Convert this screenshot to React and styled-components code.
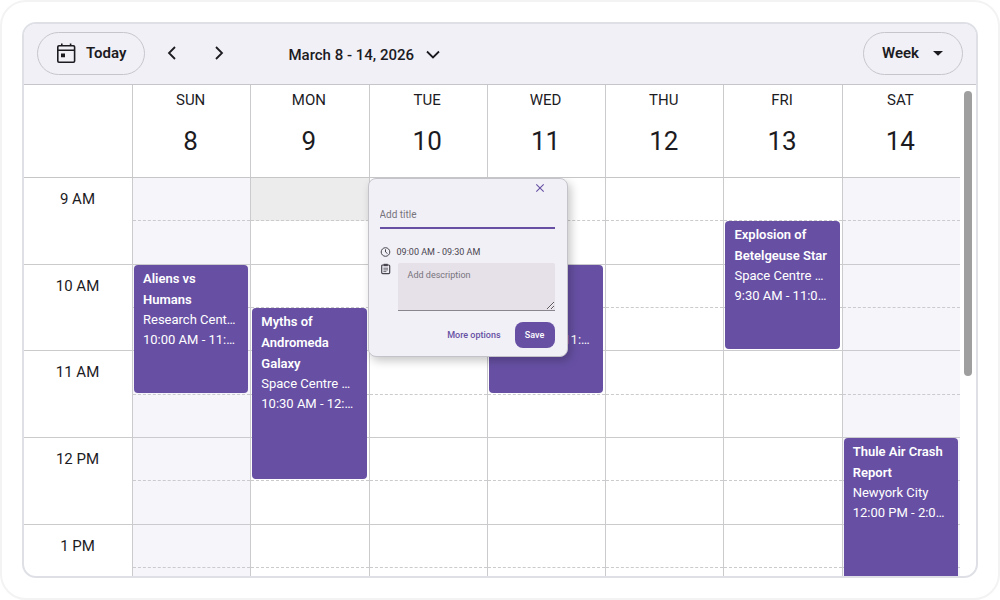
import React from "react";
import styled, { createGlobalStyle } from "styled-components";

const GlobalStyle = createGlobalStyle`
  *, *::before, *::after { box-sizing: border-box; }
  body {
    margin: 0;
    background: #fff;
    color: #1c1b1f;
    font-family: Roboto, "Liberation Sans", sans-serif;
  }
  button, input, textarea { font-family: inherit; color: inherit; }
`;

const Page = styled.main`
  display: flex;
  height: 100vh;
  padding: 20px;
  border: 2px solid #f3f3f4;
  border-radius: 26px;
`;

const Scheduler = styled.section`
  flex: 1;
  min-width: 0;
  display: flex;
  flex-direction: column;
  overflow: hidden;
  border: 2px solid #dee0e6;
  border-radius: 14px;
`;

const Toolbar = styled.header`
  flex: none;
  display: flex;
  align-items: center;
  height: 61px;
  padding: 0 13px 2px;
  background: #f1f0f7;
  border-bottom: 1px solid #c6c6ca;
`;

const PillButton = styled.button`
  display: flex;
  align-items: center;
  gap: ${(p) => p.$gap}px;
  height: 43px;
  padding: 0 18px 1px;
  border: 1px solid #c6c5cc;
  border-radius: 22px;
  background: transparent;
  font-size: 15px;
  font-weight: 600;
`;

const ArrowButton = styled.button`
  display: grid;
  place-items: center;
  width: 40px;
  height: 40px;
  margin-left: 7px;
  padding: 0;
  border: 0;
  background: transparent;
`;

const RangeButton = styled.button`
  display: flex;
  align-items: center;
  gap: 12px;
  margin: 4px auto 0 49px;
  padding: 0;
  border: 0;
  background: transparent;
  font-size: 15px;
  font-weight: 500;
`;

const Schedule = styled.div`
  flex: 1;
  min-height: 0;
  display: flex;
`;

const Calendar = styled.div`
  flex: 1;
  min-width: 0;
  display: flex;
  flex-direction: column;
`;

const WeekGrid = styled.div`
  display: grid;
  grid-template-columns: 108px repeat(7, minmax(0, 1fr));
`;

const HeaderRow = styled(WeekGrid)`
  flex: none;
  height: 93px;
  border-bottom: 1px solid #c6c6c8;
`;

const DayHeader = styled.div`
  grid-column: ${(p) => p.$column};
  display: flex;
  flex-direction: column;
  align-items: center;
  gap: 16px;
  padding: 5px 2px 0 0;
  border-left: 1px solid #cbcbce;
`;

const DayName = styled.span`
  font-size: 15px;
  line-height: 20px;
`;

const DayNumber = styled.span`
  font-size: 26px;
  line-height: 30px;
`;

const Body = styled.div`
  flex: 1;
  min-height: 0;
  overflow: hidden;
`;

const BodyGrid = styled(WeekGrid)`
  height: 520px;
`;

const TimeColumn = styled.div`
  display: grid;
  grid-template-rows: repeat(6, 1fr);
`;

const TimeCell = styled.div`
  padding: 11px 1px 0 0;
  border-bottom: 1px solid #cbcbce;
  font-size: 15px;
  line-height: 20px;
  text-align: center;
`;

const DayColumn = styled.div`
  position: relative;
  display: grid;
  grid-template-columns: minmax(0, 1fr);
  grid-template-rows: repeat(12, minmax(0, 1fr));
  border-left: 1px solid #cbcbce;
  background: ${(p) => (p.$weekend ? "#f5f5fa" : "#fff")};
`;

const Slot = styled.div`
  grid-column: 1;
  grid-row: ${(p) => p.$row};
  border-bottom: 1px ${(p) => (p.$row % 2 ? "dashed" : "solid")} #cbcbce;
  background: ${(p) => (p.$selected ? "#ececec" : "transparent")};
`;

const Event = styled.article`
  grid-column: 1;
  grid-row: ${(p) => p.$start} / span ${(p) => p.$span};
  margin: 0 2px 2px 1px;
  padding: 3px 11px 0 9px;
  overflow: hidden;
  border-radius: 4px;
  background: #6750a4;
  color: #fff;
`;

const EventTitle = styled.h3`
  margin: 0;
  font-size: 13px;
  font-weight: 600;
  line-height: 21px;
`;

const EventLine = styled.p`
  margin: 0;
  overflow: hidden;
  font-size: 13px;
  line-height: 20px;
  text-overflow: ellipsis;
  white-space: nowrap;
`;

const ScrollTrack = styled.div`
  flex: none;
  width: 16px;
  padding: 6px 4px 10px;
`;

const ScrollThumb = styled.div`
  width: 8px;
  height: 60%;
  border-radius: 4px;
  background: #9f9f9f;
`;

const Popup = styled.form`
  position: absolute;
  z-index: 2;
  top: 0;
  left: -2px;
  display: flex;
  flex-direction: column;
  width: 200px;
  padding: 2px 12px 8px 11px;
  border: 1px solid #c4c3ca;
  border-radius: 8px;
  background: #f1f0f7;
  box-shadow: 3px 4px 10px rgba(0, 0, 0, 0.22);
  font-size: 9px;
`;

const CloseButton = styled.button`
  align-self: flex-end;
  display: grid;
  place-items: center;
  width: 14px;
  height: 14px;
  margin-right: 8px;
  padding: 0;
  border: 0;
  background: transparent;
  color: #6750a4;
`;

const TitleInput = styled.input`
  width: 100%;
  height: 28px;
  margin-top: 6px;
  padding: 0;
  border: 0;
  border-bottom: 2px solid #6750a4;
  background: transparent;
  font-size: 10px;
  outline: none;
  &::placeholder { color: #77747c; }
`;

const Detail = styled.div`
  display: grid;
  grid-template-columns: 11px minmax(0, 1fr);
  column-gap: ${(p) => p.$gap}px;
  margin-top: ${(p) => p.$top}px;
  color: #49454f;
  line-height: 12px;
`;

const Description = styled.textarea`
  display: block;
  width: 100%;
  height: 48px;
  padding: 6px 10px;
  border: 0;
  border-bottom: 1px solid #8a8690;
  border-radius: 2px 2px 0 0;
  background: #e6e0e9;
  font-size: 9px;
  line-height: 13px;
  resize: vertical;
  outline: none;
  &::placeholder { color: #77747c; }
`;

const Actions = styled.div`
  display: flex;
  justify-content: flex-end;
  align-items: center;
  gap: 14px;
  margin-top: 11px;
`;

const TextButton = styled.button`
  padding: 0;
  border: 0;
  background: transparent;
  color: #6750a4;
  font-size: 9px;
  font-weight: 500;
`;

const SaveButton = styled(TextButton)`
  width: 40px;
  height: 26px;
  border-radius: 8px;
  background: #6750a4;
  color: #fff;
`;

const days = [
  { name: "SUN", number: 8, weekend: true, event: { title: "Aliens vs Humans", place: "Research Center", time: "10:00 AM - 11:30 AM", start: 3, span: 3 } },
  { name: "MON", number: 9, selected: 1, event: { title: "Myths of Andromeda Galaxy", place: "Space Centre USA", time: "10:30 AM - 12:30 PM", start: 4, span: 4 } },
  { name: "TUE", number: 10, popup: true },
  { name: "WED", number: 11, event: { title: "Blue Moon Eclipse", place: "Greenwich", time: "10:00 AM - 11:30 AM", start: 3, span: 3 } },
  { name: "THU", number: 12 },
  { name: "FRI", number: 13, event: { title: "Explosion of Betelgeuse Star", place: "Space Centre USA", time: "9:30 AM - 11:00 AM", start: 2, span: 3 } },
  { name: "SAT", number: 14, weekend: true, event: { title: "Thule Air Crash Report", place: "Newyork City", time: "12:00 PM - 2:00 PM", start: 7, span: 4 } },
];

const hours = ["9 AM", "10 AM", "11 AM", "12 PM", "1 PM"];
const slots = Array.from({ length: 12 }, (_, i) => i + 1);

const TodayIcon = () => (
  <svg width="20" height="22" viewBox="0 0 20 22" fill="none" stroke="currentColor" aria-hidden="true">
    <rect x="1.8" y="3.8" width="16.8" height="16.4" rx="1.2" strokeWidth="1.6" />
    <path d="M2 8.2h16.4M5.8 1.4v2.4M14.6 1.4v2.4" strokeWidth="1.6" />
    <path d="M5 11.4h4v3.8H5z" fill="currentColor" stroke="none" />
  </svg>
);

const Chevron = ({ d, width, height }) => (
  <svg width={width} height={height} viewBox={`0 0 ${width} ${height}`} fill="none" stroke="currentColor" strokeWidth="1.8" aria-hidden="true">
    <path d={d} />
  </svg>
);

const ClockIcon = () => (
  <svg width="11" height="12" viewBox="0 0 11 12" fill="none" stroke="currentColor" aria-hidden="true">
    <circle cx="5.5" cy="6" r="4.3" />
    <path d="M5.5 3.3V6l2 1.6" />
  </svg>
);

const NoteIcon = () => (
  <svg width="11" height="12" viewBox="0 0 11 12" fill="none" stroke="currentColor" aria-hidden="true">
    <rect x="1.7" y="2" width="8" height="8.6" rx="1" strokeWidth="1.2" />
    <path d="M3.6 .8h4.2v2.4H3.6z" fill="currentColor" stroke="none" />
    <path d="M3.4 5.2h4.6M3.4 6.9h4.6M3.4 8.6h3" strokeWidth=".8" />
  </svg>
);

function QuickAdd() {
  return (
    <Popup onSubmit={(e) => e.preventDefault()}>
      <CloseButton type="button" aria-label="Close">
        <svg width="10" height="10" viewBox="0 0 10 10" stroke="currentColor" strokeWidth="1.1" aria-hidden="true">
          <path d="M1.3 1.3l7.4 7.4M8.7 1.3L1.3 8.7" />
        </svg>
      </CloseButton>
      <TitleInput aria-label="Title" placeholder="Add title" />
      <Detail $top={17} $gap={6}>
        <ClockIcon />
        <span>09:00 AM - 09:30 AM</span>
      </Detail>
      <Detail $top={5} $gap={7}>
        <NoteIcon />
        <Description aria-label="Description" placeholder="Add description" />
      </Detail>
      <Actions>
        <TextButton type="button">More options</TextButton>
        <SaveButton type="submit">Save</SaveButton>
      </Actions>
    </Popup>
  );
}

export default function App() {
  return (
    <>
      <GlobalStyle />
      <Page>
        <Scheduler>
          <Toolbar>
            <PillButton type="button" $gap={10}>
              <TodayIcon />
              Today
            </PillButton>
            <ArrowButton type="button" aria-label="Previous week">
              <Chevron width={10} height={14} d="M8 1L2 7l6 6" />
            </ArrowButton>
            <ArrowButton type="button" aria-label="Next week">
              <Chevron width={10} height={14} d="M2 1l6 6-6 6" />
            </ArrowButton>
            <RangeButton type="button">
              March 8 - 14, 2026
              <Chevron width={14} height={10} d="M1 1.5l6 6 6-6" />
            </RangeButton>
            <PillButton type="button" $gap={13}>
              Week
              <svg width="12" height="6" viewBox="0 0 12 6" fill="currentColor" aria-hidden="true">
                <path d="M1 1h10L6 5.8z" />
              </svg>
            </PillButton>
          </Toolbar>
          <Schedule>
            <Calendar>
              <HeaderRow>
                {days.map((day, i) => (
                  <DayHeader key={day.name} $column={i + 2}>
                    <DayName>{day.name}</DayName>
                    <DayNumber>{day.number}</DayNumber>
                  </DayHeader>
                ))}
              </HeaderRow>
              <Body>
                <BodyGrid>
                  <TimeColumn>
                    {hours.map((hour) => (
                      <TimeCell key={hour}>{hour}</TimeCell>
                    ))}
                  </TimeColumn>
                  {days.map((day) => (
                    <DayColumn key={day.name} $weekend={day.weekend}>
                      {slots.map((row) => (
                        <Slot key={row} $row={row} $selected={day.selected === row} />
                      ))}
                      {day.event && (
                        <Event $start={day.event.start} $span={day.event.span}>
                          <EventTitle>{day.event.title}</EventTitle>
                          <EventLine>{day.event.place}</EventLine>
                          <EventLine>{day.event.time}</EventLine>
                        </Event>
                      )}
                      {day.popup && <QuickAdd />}
                    </DayColumn>
                  ))}
                </BodyGrid>
              </Body>
            </Calendar>
            <ScrollTrack>
              <ScrollThumb />
            </ScrollTrack>
          </Schedule>
        </Scheduler>
      </Page>
    </>
  );
}
